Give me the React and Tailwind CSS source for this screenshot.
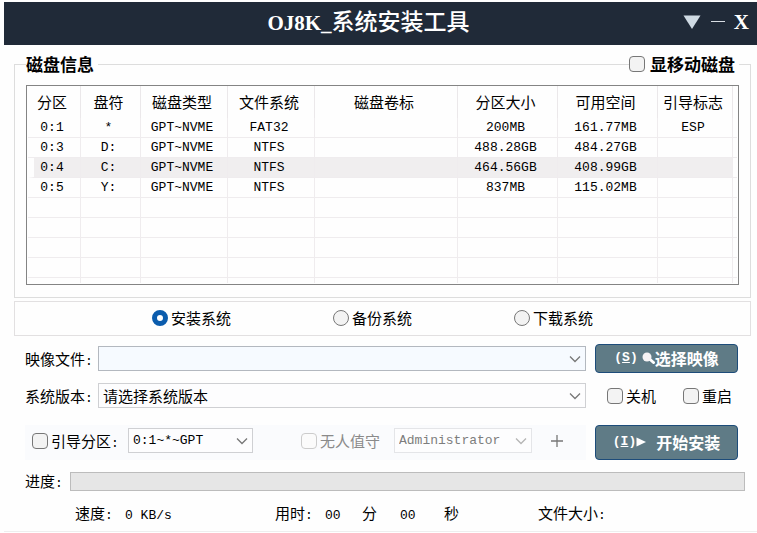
import { useState } from 'react';
import clsx from 'clsx';

const PARTITIONS = [
  { id: '0:1', letter: '*', type: 'GPT~NVME', fs: 'FAT32', label: '', size: '200MB', free: '161.77MB', flag: 'ESP' },
  { id: '0:3', letter: 'D:', type: 'GPT~NVME', fs: 'NTFS', label: '', size: '488.28GB', free: '484.27GB', flag: '' },
  { id: '0:4', letter: 'C:', type: 'GPT~NVME', fs: 'NTFS', label: '', size: '464.56GB', free: '408.99GB', flag: '' },
  { id: '0:5', letter: 'Y:', type: 'GPT~NVME', fs: 'NTFS', label: '', size: '837MB', free: '115.02MB', flag: '' },
];

const COLUMNS = [
  { key: 'id', title: '分区', width: 'w-[53px]' },
  { key: 'letter', title: '盘符', width: 'w-[60px]' },
  { key: 'type', title: '磁盘类型', width: 'w-[87px]' },
  { key: 'fs', title: '文件系统', width: 'w-[87px]' },
  { key: 'label', title: '磁盘卷标', width: '' },
  { key: 'size', title: '分区大小', width: 'w-[100px]' },
  { key: 'free', title: '可用空间', width: 'w-[100px]' },
  { key: 'flag', title: '引导标志', width: 'w-[75px]' },
];

const MODES = ['安装系统', '备份系统', '下载系统'];

function Mono({ children, className }) {
  return (
    <span className={clsx("font-['Liberation_Mono','Noto_Sans_CJK_SC',monospace] text-[13px] leading-none whitespace-pre", className)}>
      {children}
    </span>
  );
}

function Check({ id, label, disabled, className }) {
  return (
    <label htmlFor={id} className={clsx('flex items-center gap-[3px] whitespace-nowrap', disabled && 'text-[#8a8a8a]', className)}>
      <input
        id={id}
        type="checkbox"
        disabled={disabled}
        className="size-4 shrink-0 appearance-none rounded border border-[#777777] bg-[#f3f3f3] checked:bg-[#0b5cad] disabled:border-[#cccccc] disabled:bg-[#fbfbfb]"
      />
      {label}
    </label>
  );
}

function Select({ id, options, disabled, mono, tinted, className, ...rest }) {
  return (
    <div className={clsx('relative', className)}>
      <select
        id={id}
        disabled={disabled}
        className={clsx(
          'block h-[25px] w-full appearance-none border pl-1 pr-5',
          mono && "font-['Liberation_Mono','Noto_Sans_CJK_SC',monospace] text-[13px]",
          tinted ? 'border-[#b3b8bf] bg-[#f6faff]' : 'bg-[#fdfdfe]',
          !tinted && (disabled ? 'border-[#e4e5e8] text-[#7d7d7d]' : 'border-[#cfd0d3]')
        )}
        {...rest}
      >
        {options.map(o => <option key={o}>{o}</option>)}
      </select>
      <svg
        viewBox="0 0 12 8"
        className={clsx('pointer-events-none absolute right-[5px] top-[9px] h-2 w-3', disabled ? 'text-[#b5b5b5]' : 'text-[#777777]')}
        fill="none"
        stroke="currentColor"
        strokeWidth="1.3"
      >
        <path d="M1 1.5 6 6.5 11 1.5" />
      </svg>
    </div>
  );
}

function ActionButton({ className, children }) {
  return (
    <button
      type="button"
      className={clsx(
        'flex w-[143px] shrink-0 items-center justify-center rounded border border-[#1d4c7a] bg-[#5f7b86] pb-0.5 text-base font-bold leading-5 text-white hover:bg-[#6b8792]',
        className
      )}
    >
      {children}
    </button>
  );
}

export default function App() {
  const [mode, setMode] = useState(MODES[0]);
  const [selected, setSelected] = useState('0:4');

  return (
    <div className="bg-[#fefefe] pl-1 pt-0.5 font-['Noto_Sans_CJK_SC',sans-serif] text-[15px] leading-5 text-black">
      {/* title bar */}
      <header className="grid h-[43px] grid-cols-[1fr_auto_1fr] items-center bg-[#202a38] text-white">
        <h1 className="col-start-2 flex items-baseline pb-1 pr-6 text-[23px] font-medium leading-8">
          <span className="font-['Liberation_Serif',serif] text-[21px] font-bold">OJ8K_</span>
          系统安装工具
        </h1>
        <div className="flex items-center justify-end gap-2 pb-1 pr-2">
          <button type="button" aria-label="菜单" className="flex size-5 items-center justify-center">
            <svg viewBox="0 0 18 14" className="h-3.5 w-[18px]" fill="#cfdae3">
              <path d="M0.5 0.5h17L9 14z" />
            </svg>
          </button>
          <button type="button" aria-label="最小化" className="flex h-5 w-4 items-center justify-center">
            <span className="h-px w-3.5 bg-[#d8dde3]" />
          </button>
          <button type="button" className="font-['Liberation_Serif',serif] text-[21px] font-bold leading-5">X</button>
        </div>
      </header>

      {/* disk info */}
      <fieldset className="ml-2.5 mr-1.5 mt-[9px] border border-[#dddddd] px-[11px] pb-3">
        <legend className="flex h-5 w-full items-center text-[17px] font-bold">
          磁盘信息
          <span className="ml-1 h-px flex-1 bg-[#dddddd]" />
          <Check id="removable" label="显移动磁盘" className="gap-[5px] pr-1" />
        </legend>
        <div className="mt-[11px] border border-[#848484] p-px pt-0">
          <table className="w-full table-fixed border-separate border-spacing-0 text-center">
            <colgroup>
              {COLUMNS.map(c => <col key={c.key} className={c.width} />)}
              <col className="w-1" />
            </colgroup>
            <thead>
              <tr className="h-8">
                {COLUMNS.map(c => (
                  <th key={c.key} className="border-r border-[#ebe8ea] p-0 pr-1 font-normal">{c.title}</th>
                ))}
                <th className="p-0" />
              </tr>
            </thead>
            <tbody className="font-['Liberation_Mono','Noto_Sans_CJK_SC',monospace] text-[13px] leading-[19px]">
              {PARTITIONS.map(row => {
                const active = row.id === selected;
                return (
                  <tr key={row.id} className="h-5" onClick={() => setSelected(row.id)}>
                    {COLUMNS.map((c, i) => (
                      <td
                        key={c.key}
                        className={clsx(
                          'border-b border-r border-[#efecee] py-0 pl-0',
                          active && 'bg-[#f0eeef]',
                          active && i === 0 ? 'border-l-6 border-l-[#fefefe] pr-2.5' : 'pr-1'
                        )}
                      >
                        {row[c.key]}
                      </td>
                    ))}
                    <td className="border-b border-[#efecee] p-0" />
                  </tr>
                );
              })}
              {[0, 1, 2, 3].map(n => (
                <tr key={n} className="h-5">
                  {COLUMNS.map(c => <td key={c.key} className="border-b border-r border-[#efecee] p-0" />)}
                  <td className="border-b border-[#efecee] p-0" />
                </tr>
              ))}
              <tr className="h-[5px]">
                {COLUMNS.map(c => <td key={c.key} className="border-r border-[#efecee] p-0" />)}
                <td className="p-0" />
              </tr>
            </tbody>
          </table>
        </div>
      </fieldset>

      {/* mode */}
      <div className="ml-2.5 mr-1.5 mt-[3px] flex h-[35px] items-center justify-center gap-[102px] border border-[#e2e0e1] pb-0.5 pr-5">
        {MODES.map(m => (
          <label key={m} className="flex items-center gap-[3px]">
            <input
              type="radio"
              name="mode"
              checked={mode === m}
              onChange={() => setMode(m)}
              className="size-4 appearance-none rounded-full border border-[#777777] bg-[#f3f3f3] checked:border-5 checked:border-[#0b5cad] checked:bg-white"
            />
            {m}
          </label>
        ))}
      </div>

      <div className="pl-[21px] pr-[19px] pt-2">
        <div className="flex items-center">
          <label htmlFor="image" className="w-[73px] shrink-0">映像文件<Mono>:</Mono></label>
          <Select id="image" options={['']} tinted className="mr-[9px] flex-1" />
          <ActionButton className="h-[29px]">
            <Mono className="mr-1">(<u>S</u>)</Mono>
            <svg viewBox="0 0 13 12" className="h-3 w-[13px]">
              <path d="M7 6.500 11.500 10.500" stroke="#ffffff" strokeWidth="3" strokeLinecap="round" />
              <circle cx="5" cy="5" r="4.500" fill="#f6f3f5" />
            </svg>
            选择映像
          </ActionButton>
        </div>

        <div className="mt-2.5 flex items-center">
          <label htmlFor="version" className="w-[73px] shrink-0">系统版本<Mono>:</Mono></label>
          <Select id="version" options={['请选择系统版本']} className="mr-[9px] flex-1" />
          <div className="flex w-[143px] shrink-0 justify-between pl-3 pr-1.5">
            <Check id="shutdown" label="关机" />
            <Check id="restart" label="重启" />
          </div>
        </div>

        <div className="mt-[17px] flex">
          <div className="mr-[9px] flex flex-1 items-center bg-[#fafbfd] pb-1 pl-[7px]">
            <Check id="boot" label={<span>引导分区<Mono>:</Mono></span>} className="w-24" />
            <Select aria-label="引导分区" options={['0:1~*~GPT']} mono className="w-[125px]" />
            <Check id="unattended" label="无人值守" disabled className="ml-12 w-[93px]" />
            <Select aria-label="用户名" options={['Administrator']} mono disabled className="w-[138px]" />
            <button type="button" aria-label="添加" className="ml-[18px] text-[#777777]">
              <svg viewBox="0 0 14 14" className="size-3.5" stroke="currentColor" strokeWidth="1.3">
                <path d="M7 1v12M1 7h12" />
              </svg>
            </button>
          </div>
          <ActionButton className="h-[35px]">
            <Mono>(<u>I</u>)</Mono>
            <svg viewBox="0 0 10 10" className="mr-2.5 size-2.5" fill="#ffffff">
              <path d="M0.500 0.500 10 5 0.500 9.500z" />
            </svg>
            开始安装
          </ActionButton>
        </div>
      </div>

      {/* progress */}
      <div className="mt-[11px] flex items-center pl-[21px] pr-3">
        <label htmlFor="progress" className="w-[45px] shrink-0">进度<Mono>:</Mono></label>
        <progress
          id="progress"
          value="0"
          max="100"
          className="h-[19px] flex-1 appearance-none border border-[#bcbcbc] bg-[#e6e6e6] [&::-webkit-progress-bar]:bg-[#e6e6e6] [&::-webkit-progress-value]:bg-[#06b025]"
        />
      </div>

      <footer className="mt-3 flex items-baseline border-b border-[#eeeeee] pb-2 pl-[71px]">
        <span className="w-[50px]">速度<Mono>:</Mono></span>
        <Mono className="w-[150px]">0 KB/s</Mono>
        <span className="w-[50px]">用时<Mono>:</Mono></span>
        <Mono className="w-[37px]">00</Mono>
        <span className="w-[38px]">分</span>
        <Mono className="w-11">00</Mono>
        <span className="w-[94px]">秒</span>
        <span>文件大小<Mono>:</Mono></span>
      </footer>
    </div>
  );
}
